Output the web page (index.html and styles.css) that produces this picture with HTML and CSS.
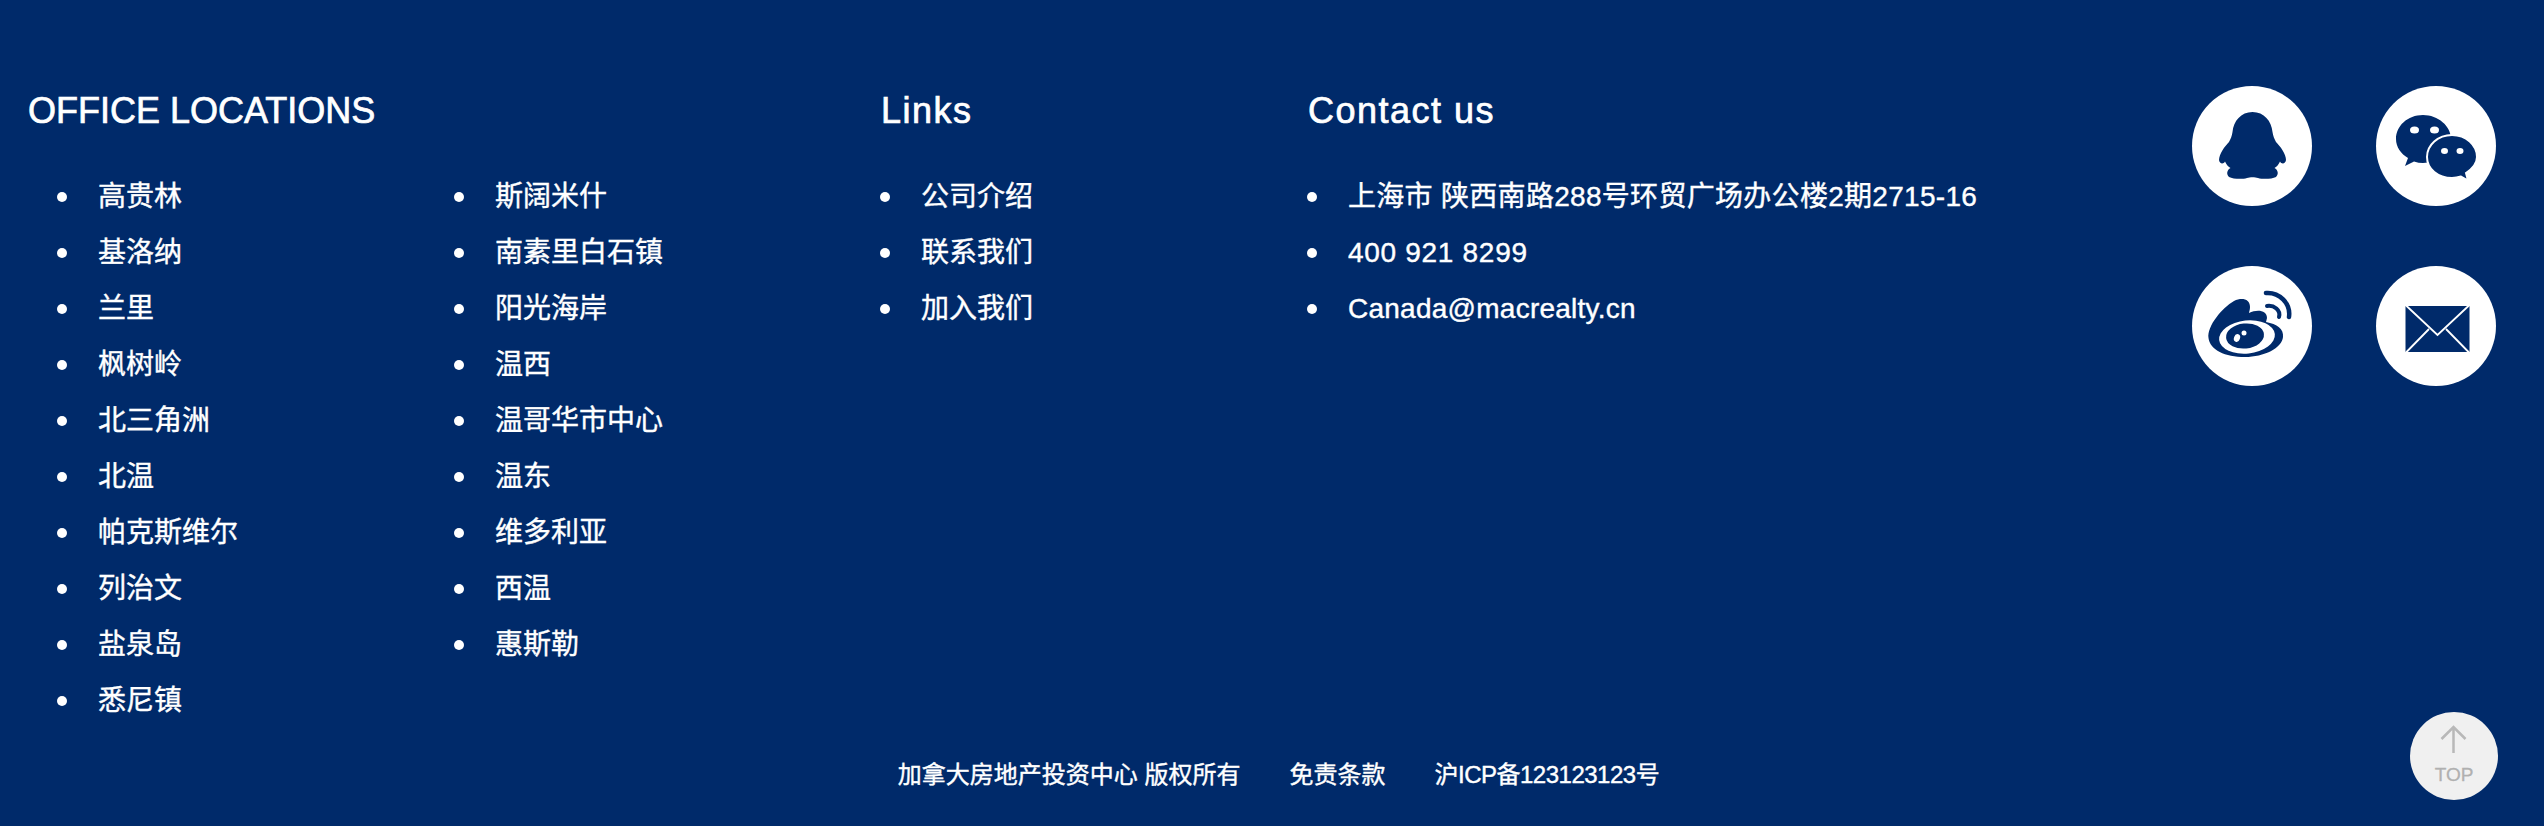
FILE: index.html
```html
<!DOCTYPE html>
<html lang="zh-CN">
<head>
<meta charset="utf-8">
<title>Footer</title>
<link rel="stylesheet" href="styles.css">
</head>
<body>
<footer class="footer">
  <div class="main">
    <section class="office">
      <h3 class="title">OFFICE LOCATIONS</h3>
      <div class="office-lists">
        <ul class="list">
          <li>高贵林</li><li>基洛纳</li><li>兰里</li><li>枫树岭</li><li>北三角洲</li><li>北温</li><li>帕克斯维尔</li><li>列治文</li><li>盐泉岛</li><li>悉尼镇</li>
        </ul>
        <ul class="list">
          <li>斯阔米什</li><li>南素里白石镇</li><li>阳光海岸</li><li>温西</li><li>温哥华市中心</li><li>温东</li><li>维多利亚</li><li>西温</li><li>惠斯勒</li>
        </ul>
      </div>
    </section>
    <section class="links">
      <h3 class="title title-wide">Links</h3>
      <ul class="list list-tight">
        <li>公司介绍</li><li>联系我们</li><li>加入我们</li>
      </ul>
    </section>
    <section class="contact">
      <h3 class="title title-wide">Contact us</h3>
      <ul class="list list-tight">
        <li class="addr">上海市 陕西南路288号环贸广场办公楼2期2715-16</li><li class="phone">400 921 8299</li><li class="mail">Canada@macrealty.cn</li>
      </ul>
    </section>
    <div class="social">
      <svg class="icon" viewBox="0 0 120 120" aria-label="QQ"><circle cx="60" cy="60" r="60" fill="#fff"/><path fill="#002a6a" d="M60.500 26C49 26 41.500 35 40.500 46C40 50 38.500 53 37 56C33 60 27 68 27 74C27.500 77.500 31 79 33 75.500C34 78 36 80.500 38.500 82C35 84 34 88 37 91C41 93 50 93.500 55 92C58 91 63 91 66 92C71 93.500 80 93 84 91C87 88 86 84 82.500 82C85 80.500 87 78 88 75.500C90 79 93.500 77.500 94 74C94 68 88 60 84 56C82.500 53 81 50 80.500 46C79.500 35 72 26 60.500 26Z"/></svg>
      <svg class="icon" viewBox="0 0 120 120" aria-label="WeChat"><circle cx="60" cy="60" r="60" fill="#fff"/><path fill="#002a6a" d="M47 29C31.500 29 20 40 20 53C20 61 25 68 32 72L29 80L38 75.500C41 76.500 44 77 47 77C62 77 75 66 75 53C75 40 62 29 47 29Z"/><path fill="#002a6a" stroke="#fff" stroke-width="2" d="M76 49C62 49 51 59 51 71C51 83 62 92 76 92C79 92 82 91.500 85 90.500L92 94.500L90 87C96 83 101 77 101 71C101 59 90 49 76 49Z"/><ellipse cx="38.500" cy="44" rx="4.500" ry="3.500" fill="#fff"/><ellipse cx="58.500" cy="44" rx="4.500" ry="3.500" fill="#fff"/><ellipse cx="68.500" cy="65" rx="3.500" ry="3" fill="#fff"/><ellipse cx="84" cy="65" rx="3.500" ry="3" fill="#fff"/></svg>
      <svg class="icon" viewBox="0 0 120 120" aria-label="Weibo"><circle cx="60" cy="60" r="60" fill="#fff"/><path fill="#002a6a" d="M16.500 72C15 60 30 42 42 35C50 31 58 33 58 41C58 44 57 46 57 47C65 43 75 44 75 52L74 56C85 58 92 63 91 71C90 82 72 91 53 91C33 91 18 84 16.500 72Z"/><ellipse cx="55" cy="71" rx="28" ry="16.500" transform="rotate(-6 55 71)" fill="#fff"/><ellipse cx="53" cy="70" rx="19" ry="12.500" transform="rotate(-6 53 70)" fill="#002a6a"/><ellipse cx="45" cy="72" rx="3" ry="4" transform="rotate(20 45 72)" fill="#fff"/><circle cx="52" cy="67" r="2.500" fill="#fff"/><path fill="none" stroke="#002a6a" stroke-width="4.500" stroke-linecap="round" d="M74 27C87 26 99 37 97 51"/><path fill="none" stroke="#002a6a" stroke-width="4" stroke-linecap="round" d="M75 40C82 39 89 44 87 51"/></svg>
      <svg class="icon" viewBox="0 0 120 120" aria-label="Mail"><circle cx="60" cy="60" r="60" fill="#fff"/><rect x="29.500" y="40" width="64" height="46" fill="#002a6a"/><path fill="none" stroke="#fff" stroke-width="1.800" d="M29.500 39L61.500 69L93.500 39M29.500 87L53 63M93.500 87L70 63"/></svg>
    </div>
  </div>
  <div class="legal">
    <span>加拿大房地产投资中心 版权所有</span><span>免责条款</span><span class="icp">沪ICP备123123123号</span>
  </div>
  <a class="top">
    <svg class="top-arrow" viewBox="0 0 28 28" aria-hidden="true"><path fill="none" stroke="#b8b8b8" stroke-width="2.500" d="M13.500 28V2M1.500 14L13.500 2L25.500 14"/></svg>
    <span class="top-label">TOP</span>
  </a>
</footer>
</body>
</html>
```
FILE: styles.css
```css
* { box-sizing: border-box; }
html, body { margin: 0; padding: 0; }
body {
  width: 2544px;
  height: 826px;
  overflow: hidden;
  background: #002a6a;
  color: #fff;
  font-family: "Liberation Sans", "Noto Sans CJK SC", sans-serif;
}
.footer { position: relative; height: 826px; padding: 87px 48px 0 28px; }
.main { display: flex; height: 639px; }
.title { margin: 0; font-size: 36px; line-height: 48px; font-weight: 400; -webkit-text-stroke: 0.7px #fff; }
.title-wide { letter-spacing: 1.5px; }
.list { margin: 34px 0 0; padding: 0 0 0 70px; list-style: none; font-size: 28px; line-height: 56px; font-weight: 400; -webkit-text-stroke: 0.4px #fff; }
.list li { display: flex; align-items: center; }
.list li::before { content: ""; flex: none; width: 10px; height: 10px; margin: 0 31px 0 -41px; border-radius: 50%; background: #fff; }
.list-tight { padding-left: 40px; }
.addr { letter-spacing: 0.3px; }
.phone { letter-spacing: 0.7px; }
.mail { letter-spacing: 0.25px; }
.office { width: 853px; }
.office-lists { display: grid; grid-template-columns: 397px 1fr; }
.links { width: 427px; }
.contact { flex: 1; }
.social { display: grid; grid-template-columns: 120px 120px; grid-auto-rows: 120px; column-gap: 64px; row-gap: 60px; align-content: start; margin-top: -1px; }
.icon { display: block; width: 120px; height: 120px; }
.legal { display: flex; justify-content: center; gap: 49px; font-size: 24px; line-height: 32px; font-weight: 400; margin-top: 33px; padding-left: 33px; -webkit-text-stroke: 0.4px #fff; }
.icp { letter-spacing: -0.5px; }
.top { position: absolute; left: 2410px; top: 712px; width: 88px; height: 88px; border-radius: 50%; background: #f0f0f0; display: flex; flex-direction: column; align-items: center; }
.top-arrow { width: 28px; height: 28px; margin-top: 13px; }
.top-label { font-size: 19px; line-height: 20px; margin-top: 12px; color: #b0b0b0; -webkit-text-stroke: 0.3px #b0b0b0; }
```
